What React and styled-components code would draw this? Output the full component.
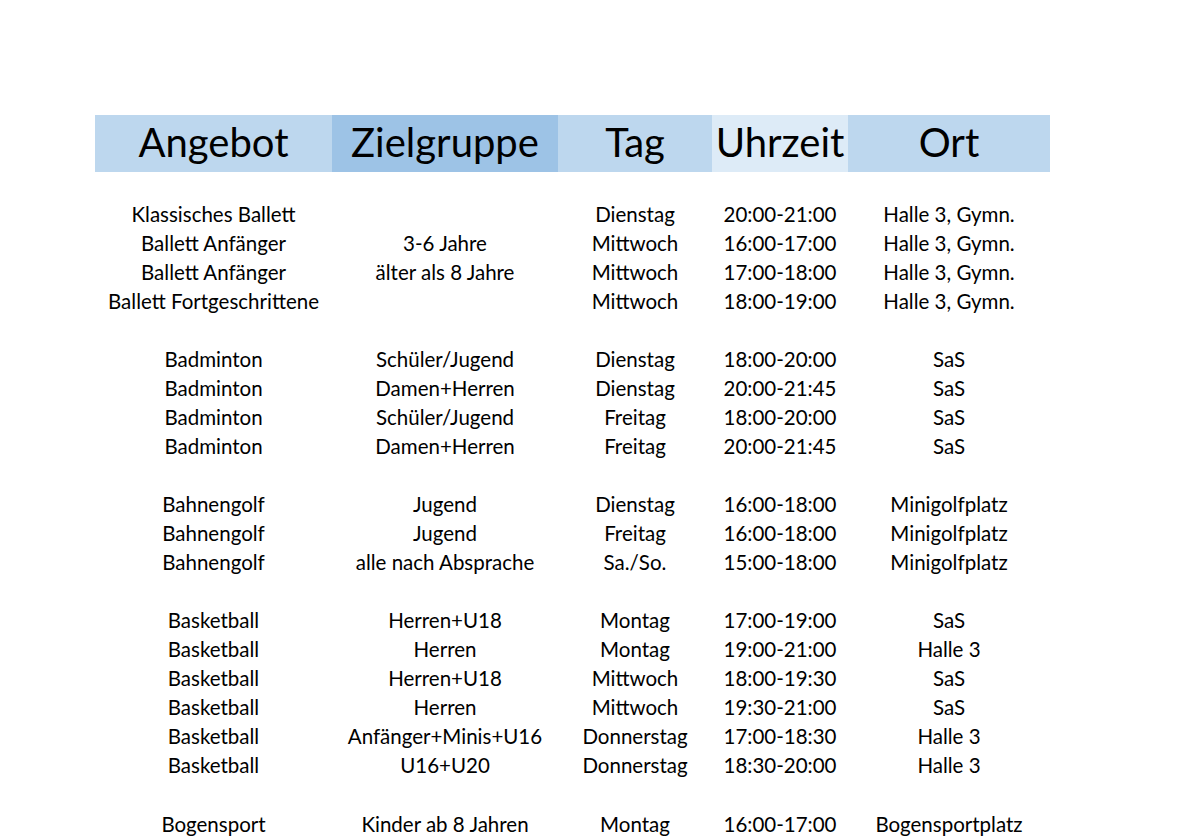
import React from 'react';
import styled, { createGlobalStyle } from 'styled-components';

const GlobalStyle = createGlobalStyle`
    html, body {
        margin: 0;
        padding: 0;
        background: #fff;
    }
    body {
        font-family: Lato, "Open Sans", sans-serif;
        color: #000;
    }
`;

const Page = styled.div`
    width: 1177px;
    height: 837px;
    overflow: hidden;
    box-sizing: border-box;
    padding: 115px 0 0 95px;
`;

const Grid = styled.div`
    display: grid;
    grid-template-columns: 237px 226px 154px 136px 202px;
    width: 955px;
`;

const HeadCell = styled.div`
    box-sizing: border-box;
    height: 57px;
    padding-bottom: 4px;
    display: flex;
    align-items: center;
    justify-content: center;
    font-size: 40px;
    background: ${({ tone }) => tone};
    white-space: nowrap;
`;

const Body = styled.div`
    grid-column: 1 / -1;
    display: grid;
    grid-template-columns: 237px 226px 154px 136px 202px;
    padding-top: 27px;
`;

const Cell = styled.div`
    height: 29.05px;
    display: flex;
    align-items: center;
    justify-content: center;
    font-size: 20.5px;
    white-space: nowrap;
`;

const Gap = styled.div`
    grid-column: 1 / -1;
    height: 29.05px;
`;

const headers = [
    ['Angebot', '#bdd7ee'],
    ['Zielgruppe', '#9dc3e6'],
    ['Tag', '#bdd7ee'],
    ['Uhrzeit', '#ddebf7'],
    ['Ort', '#bdd7ee'],
];

const groups = [
    [
        ['Klassisches Ballett', '', 'Dienstag', '20:00-21:00', 'Halle 3, Gymn.'],
        ['Ballett Anfänger', '3-6 Jahre', 'Mittwoch', '16:00-17:00', 'Halle 3, Gymn.'],
        ['Ballett Anfänger', 'älter als 8 Jahre', 'Mittwoch', '17:00-18:00', 'Halle 3, Gymn.'],
        ['Ballett Fortgeschrittene', '', 'Mittwoch', '18:00-19:00', 'Halle 3, Gymn.'],
    ],
    [
        ['Badminton', 'Schüler/Jugend', 'Dienstag', '18:00-20:00', 'SaS'],
        ['Badminton', 'Damen+Herren', 'Dienstag', '20:00-21:45', 'SaS'],
        ['Badminton', 'Schüler/Jugend', 'Freitag', '18:00-20:00', 'SaS'],
        ['Badminton', 'Damen+Herren', 'Freitag', '20:00-21:45', 'SaS'],
    ],
    [
        ['Bahnengolf', 'Jugend', 'Dienstag', '16:00-18:00', 'Minigolfplatz'],
        ['Bahnengolf', 'Jugend', 'Freitag', '16:00-18:00', 'Minigolfplatz'],
        ['Bahnengolf', 'alle nach Absprache', 'Sa./So.', '15:00-18:00', 'Minigolfplatz'],
    ],
    [
        ['Basketball', 'Herren+U18', 'Montag', '17:00-19:00', 'SaS'],
        ['Basketball', 'Herren', 'Montag', '19:00-21:00', 'Halle 3'],
        ['Basketball', 'Herren+U18', 'Mittwoch', '18:00-19:30', 'SaS'],
        ['Basketball', 'Herren', 'Mittwoch', '19:30-21:00', 'SaS'],
        ['Basketball', 'Anfänger+Minis+U16', 'Donnerstag', '17:00-18:30', 'Halle 3'],
        ['Basketball', 'U16+U20', 'Donnerstag', '18:30-20:00', 'Halle 3'],
    ],
    [
        ['Bogensport', 'Kinder ab 8 Jahren', 'Montag', '16:00-17:00', 'Bogensportplatz'],
    ],
];

function App() {
    return (
        <Page>
            <GlobalStyle />
            <Grid>
                {headers.map(([label, tone]) => (
                    <HeadCell key={label} tone={tone}>{label}</HeadCell>
                ))}
                <Body>
                    {groups.map((rows, g) => (
                        <React.Fragment key={g}>
                            {g > 0 && <Gap />}
                            {rows.map((row, r) =>
                                row.map((text, c) => <Cell key={`${r}-${c}`}>{text}</Cell>)
                            )}
                        </React.Fragment>
                    ))}
                </Body>
            </Grid>
        </Page>
    );
}

export default App;
